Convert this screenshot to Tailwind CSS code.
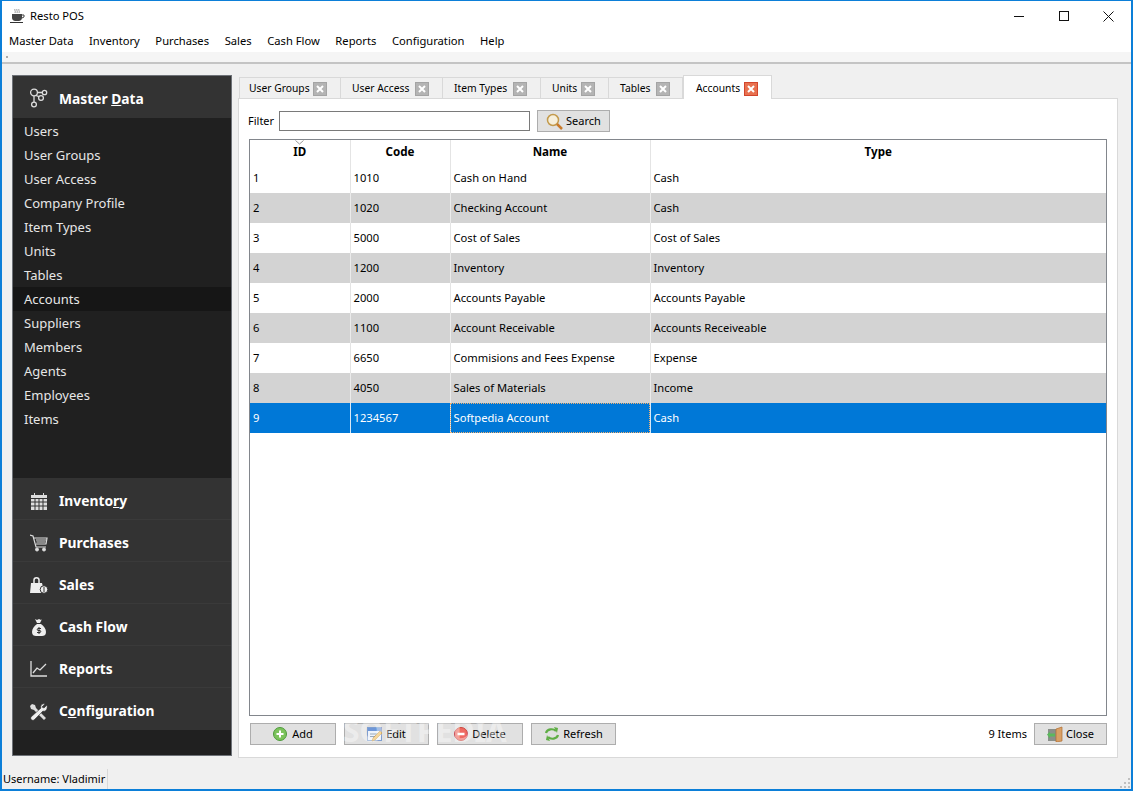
<!DOCTYPE html>
<html lang="en">
<head>
  <meta charset="UTF-8" />
  <title>Resto POS</title>
  <script src="https://cdn.jsdelivr.net/npm/@tailwindcss/browser@4"></script>
</head>
<body class="w-[1133px] h-[791px] overflow-hidden font-['Noto_Sans',sans-serif] text-[11.2px] text-black">
<div class="relative w-full h-full flex flex-col bg-[#f0f0f0] border-x-2 border-t border-b-2 border-[#0c7fd8]">

  <!-- Title bar -->
  <div class="h-[30px] bg-white flex items-center shrink-0 pl-[7px]">
    <svg width="16" height="16" viewBox="0 0 16 16" class="mr-[5px]">
      <path d="M6 1c-1 1 1 2 0 4M8 1c-1 1 1 2 0 4M10 1c-1 1 1 2 0 4" stroke="#999" fill="none"/>
      <path d="M3 6h10v4c0 2-2 3-3 3H6c-1 0-3-1-3-3z" fill="#444"/>
      <path d="M13 7h2v2l-2 1" stroke="#444" fill="none"/>
      <path d="M1 14h13v1H1z" fill="#333"/>
    </svg>
    <span>Resto POS</span>
    <div class="ml-auto flex h-full items-center">
      <button class="w-[45px] h-full flex items-center justify-center"><svg width="10" height="10"><path d="M0 5.5h10" stroke="#111"/></svg></button>
      <button class="w-[45px] h-full flex items-center justify-center"><svg width="10" height="10"><rect x=".5" y=".5" width="9" height="9" fill="none" stroke="#111"/></svg></button>
      <button class="w-[45px] h-full flex items-center justify-center"><svg width="11" height="11"><path d="M.5.5l10 10M10.5.5l-10 10" stroke="#111"/></svg></button>
    </div>
  </div>

  <!-- Menu bar -->
  <nav class="h-[21px] bg-white shrink-0 flex items-center pl-[7px] gap-[15.6px]">
    <span>Master Data</span><span>Inventory</span><span>Purchases</span><span>Sales</span><span>Cash Flow</span><span>Reports</span><span>Configuration</span><span>Help</span>
  </nav>

  <!-- Toolbar strip -->
  <div class="h-[12px] shrink-0 bg-[#f5f5f5] border-b-2 border-[#c4c4c4] pl-[4px] flex items-center"><span class="w-[2px] h-[2px] bg-[#aaa]"></span></div>

  <!-- Body -->
  <div class="flex-1 min-h-0 flex pl-[10px] pr-[13px] pt-[11px] gap-[7px]">

    <!-- Sidebar -->
    <aside class="w-[220px] h-[681px] shrink-0 flex flex-col bg-[#202020] border border-[#6e7278] text-white">
      <div class="h-[42px] shrink-0 bg-[#333] flex items-center pl-[16px] pt-[5px] gap-[11px]">
        <svg width="19" height="20" viewBox="0 0 19 20" fill="none" stroke="#ddd" stroke-width="1.3" class="-mt-[3px]">
          <circle cx="5" cy="4.5" r="3.4"/><circle cx="15.5" cy="4.5" r="2.2"/><circle cx="12" cy="10" r="2.4"/><circle cx="5" cy="16.5" r="2.4"/>
          <path d="M8.4 4.5h4.9M7 7.5l3 1.2M5 8v6"/>
        </svg>
        <span class="text-[13.8px] font-bold">Master <span class="underline">D</span>ata</span>
      </div>
      <ul class="h-[360px] shrink-0 pt-px text-[13px] text-[#e6e6e6]">
        <li class="h-[24px] leading-[24px] pl-[11px]">Users</li>
        <li class="h-[24px] leading-[24px] pl-[11px]">User Groups</li>
        <li class="h-[24px] leading-[24px] pl-[11px]">User Access</li>
        <li class="h-[24px] leading-[24px] pl-[11px]">Company Profile</li>
        <li class="h-[24px] leading-[24px] pl-[11px]">Item Types</li>
        <li class="h-[24px] leading-[24px] pl-[11px]">Units</li>
        <li class="h-[24px] leading-[24px] pl-[11px]">Tables</li>
        <li class="h-[24px] leading-[24px] pl-[11px] bg-[#161616]">Accounts</li>
        <li class="h-[24px] leading-[24px] pl-[11px]">Suppliers</li>
        <li class="h-[24px] leading-[24px] pl-[11px]">Members</li>
        <li class="h-[24px] leading-[24px] pl-[11px]">Agents</li>
        <li class="h-[24px] leading-[24px] pl-[11px]">Employees</li>
        <li class="h-[24px] leading-[24px] pl-[11px]">Items</li>
      </ul>
      <div class="shrink-0 bg-[#333] text-[13.8px] font-bold">
        <div class="h-[42px] pt-[5px] border-b border-[#3a3a3a] flex items-center pl-[17px] gap-[11px]">
          <svg width="18" height="18" viewBox="0 0 18 18" fill="#ddd"><path d="M1 3h16v15H1z"/><path d="M4 1h1v3H4zM13 1h1v3h-1z"/><path d="M1 6.5h16M1 10h16M1 14h16M5 6v12M9 6v12M13 6v12" stroke="#333"/></svg>
          <span>Invento<span class="underline">r</span>y</span>
        </div>
        <div class="h-[42px] pt-[5px] border-b border-[#3a3a3a] flex items-center pl-[17px] gap-[11px]">
          <svg width="18" height="18" viewBox="0 0 18 18" fill="none" stroke="#ddd"><path d="M0 1l3 1 3 11h10M4 4h13l-1 6H6" stroke-width="1.2"/><path d="M6 6h10M6.500 8h9" /><circle cx="7" cy="15.500" r="1.500" fill="#ddd"/><circle cx="14" cy="15.500" r="1.500" fill="#ddd"/></svg>
          <span>Purchases</span>
        </div>
        <div class="h-[42px] pt-[5px] border-b border-[#3a3a3a] flex items-center pl-[17px] gap-[11px]">
          <svg width="18" height="18" viewBox="0 0 18 18"><path d="M1 7h11l1 4-1 6H0z" fill="#eee"/><path d="M4 7V4c0-3 5-3 5 0v3" stroke="#eee" stroke-width="1.500" fill="none"/><circle cx="14" cy="13.500" r="3.800" fill="#eee" stroke="#333"/><path d="M14 11v5" stroke="#333"/></svg>
          <span>Sales</span>
        </div>
        <div class="h-[42px] pt-[5px] border-b border-[#3a3a3a] flex items-center pl-[17px] gap-[11px]">
          <svg width="18" height="18" viewBox="0 0 18 18"><path d="M5 1l2 1 2-1 2 1 1-1-2 4H7z" fill="#eee"/><path d="M7 6h4c3 2 5 5 5 8 0 3-2 4-4 4H6c-2 0-4-1-4-4 0-3 2-6 5-8z" fill="#eee"/><path d="M9 9v7M11 10.500H8c-1 0-1 2 0 2h2c1 0 1 2 0 2H7" stroke="#333" fill="none"/></svg>
          <span>Cash Flow</span>
        </div>
        <div class="h-[42px] pt-[5px] border-b border-[#3a3a3a] flex items-center pl-[17px] gap-[11px]">
          <svg width="18" height="18" viewBox="0 0 18 18" fill="none" stroke="#ddd" stroke-width="1.300"><path d="M1 1v15h16"/><path d="M3 13l4-5 3 2 6-6"/></svg>
          <span>Reports</span>
        </div>
        <div class="h-[42px] pt-[5px] flex items-center pl-[17px] gap-[11px]">
          <svg width="18" height="18" viewBox="0 0 18 18"><path d="M2 1l3 1 1 3 10 10-2 2L4 7 1 6 0 3z" fill="#ddd"/><path d="M17 2l-3 3-2-1 3-3c-3-1-5 2-4 4L1 14c-1 2 1 4 3 3L13 8c2 1 5-1 4-6z" fill="#eee" stroke="#333" stroke-width=".6"/></svg>
          <span>C<span class="underline">o</span>nfiguration</span>
        </div>
      </div>
    </aside>

    <!-- Tabs and pane -->
    <section class="flex-1 min-w-0 flex flex-col h-[683px]">
      <div class="h-[23px] shrink-0 flex items-end relative z-10 text-[10.3px] whitespace-nowrap">
        <div class="w-[102px] h-[21px] pt-px border border-b-0 border-[#d9d9d9] flex items-center pl-[9px]"><span>User Groups</span><span class="w-[14px] h-[14px] shrink-0 ml-auto mr-[13px] bg-[#b4b4b4] border border-[#a4a4a4] flex items-center justify-center"><svg width="8" height="8"><path d="M1 1l6 6M7 1L1 7" stroke="#fff" stroke-width="2"/></svg></span></div>
        <div class="w-[102px] h-[21px] pt-px border border-b-0 border-l-0 border-[#d9d9d9] flex items-center pl-[11px]"><span>User Access</span><span class="w-[14px] h-[14px] shrink-0 ml-auto mr-[13px] bg-[#b4b4b4] border border-[#a4a4a4] flex items-center justify-center"><svg width="8" height="8"><path d="M1 1l6 6M7 1L1 7" stroke="#fff" stroke-width="2"/></svg></span></div>
        <div class="w-[98px] h-[21px] pt-px border border-b-0 border-l-0 border-[#d9d9d9] flex items-center pl-[11px]"><span>Item Types</span><span class="w-[14px] h-[14px] shrink-0 ml-auto mr-[13px] bg-[#b4b4b4] border border-[#a4a4a4] flex items-center justify-center"><svg width="8" height="8"><path d="M1 1l6 6M7 1L1 7" stroke="#fff" stroke-width="2"/></svg></span></div>
        <div class="w-[68px] h-[21px] pt-px border border-b-0 border-l-0 border-[#d9d9d9] flex items-center pl-[11px]"><span>Units</span><span class="w-[14px] h-[14px] shrink-0 ml-auto mr-[13px] bg-[#b4b4b4] border border-[#a4a4a4] flex items-center justify-center"><svg width="8" height="8"><path d="M1 1l6 6M7 1L1 7" stroke="#fff" stroke-width="2"/></svg></span></div>
        <div class="w-[74px] h-[21px] pt-px border border-b-0 border-l-0 border-[#d9d9d9] flex items-center pl-[11px]"><span>Tables</span><span class="w-[14px] h-[14px] shrink-0 ml-auto mr-[12px] bg-[#b4b4b4] border border-[#a4a4a4] flex items-center justify-center"><svg width="8" height="8"><path d="M1 1l6 6M7 1L1 7" stroke="#fff" stroke-width="2"/></svg></span></div>
        <div class="w-[89px] h-[24px] -mb-px pt-[2px] bg-white border border-b-0 border-[#d9d9d9] flex items-center pl-[12px]"><span>Accounts</span><span class="w-[14px] h-[14px] shrink-0 ml-auto mr-[13px] bg-[#e8714f] border border-[#d2452c] flex items-center justify-center"><svg width="8" height="8"><path d="M1 1l6 6M7 1L1 7" stroke="#fff" stroke-width="2"/></svg></span></div>
      </div>

      <div class="relative flex-1 min-h-0 flex flex-col bg-white border border-[#d9d9d9] ml-[-1px] pl-[9px] pr-[10px] pt-[11px] pb-[12px]">
        <!-- Filter row -->
        <div class="h-[22px] shrink-0 flex items-center text-[11px]">
          <span class="w-[31px]">Filter</span>
          <input class="w-[251px] h-[20px] bg-white border border-[#7a7a7a]" />
          <button class="ml-[7px] w-[73px] h-[22px] bg-[#e1e1e1] border border-[#adadad] flex items-center justify-center gap-[3px]">
            <svg width="17" height="17" viewBox="0 0 17 17" fill="none"><circle cx="7" cy="7" r="5.500" fill="#f6efdc" stroke="#c39a4c" stroke-width="1.500"/><path d="M11 11l5 5" stroke="#c97a2b" stroke-width="2.500"/></svg>
            <span>Search</span>
          </button>
        </div>

        <!-- Table -->
        <div class="relative flex-1 min-h-0 mt-[7px] ml-px border border-[#82868c] bg-white">
          <svg width="9" height="5" class="absolute left-[45px] top-0"><path d="M.5.500l4 3.500 4-3.500" stroke="#999" fill="none"/></svg>
          <table class="w-[856px] table-fixed border-collapse text-[11.2px]">
            <colgroup><col class="w-[100px]"><col class="w-[100px]"><col class="w-[200px]"><col class="w-[456px]"></colgroup>
            <thead>
              <tr class="h-[23px] text-[11.6px] font-bold text-center">
                <th class="border-r border-[#e4e4e4]">ID</th><th class="border-r border-[#e4e4e4]">Code</th><th class="border-r border-[#e4e4e4]">Name</th><th>Type</th>
              </tr>
            </thead>
            <tbody>
              <tr class="h-[30px]"><td class="pl-[3px] border-r border-[#e4e4e4]">1</td><td class="pl-[3px] border-r border-[#e4e4e4]">1010</td><td class="pl-[3px] border-r border-[#e4e4e4]">Cash on Hand</td><td class="pl-[3px]">Cash</td></tr>
              <tr class="h-[30px] bg-[#d3d3d3]"><td class="pl-[3px] border-r border-[#ebebeb]">2</td><td class="pl-[3px] border-r border-[#ebebeb]">1020</td><td class="pl-[3px] border-r border-[#ebebeb]">Checking Account</td><td class="pl-[3px]">Cash</td></tr>
              <tr class="h-[30px]"><td class="pl-[3px] border-r border-[#e4e4e4]">3</td><td class="pl-[3px] border-r border-[#e4e4e4]">5000</td><td class="pl-[3px] border-r border-[#e4e4e4]">Cost of Sales</td><td class="pl-[3px]">Cost of Sales</td></tr>
              <tr class="h-[30px] bg-[#d3d3d3]"><td class="pl-[3px] border-r border-[#ebebeb]">4</td><td class="pl-[3px] border-r border-[#ebebeb]">1200</td><td class="pl-[3px] border-r border-[#ebebeb]">Inventory</td><td class="pl-[3px]">Inventory</td></tr>
              <tr class="h-[30px]"><td class="pl-[3px] border-r border-[#e4e4e4]">5</td><td class="pl-[3px] border-r border-[#e4e4e4]">2000</td><td class="pl-[3px] border-r border-[#e4e4e4]">Accounts Payable</td><td class="pl-[3px]">Accounts Payable</td></tr>
              <tr class="h-[30px] bg-[#d3d3d3]"><td class="pl-[3px] border-r border-[#ebebeb]">6</td><td class="pl-[3px] border-r border-[#ebebeb]">1100</td><td class="pl-[3px] border-r border-[#ebebeb]">Account Receivable</td><td class="pl-[3px]">Accounts Receiveable</td></tr>
              <tr class="h-[30px]"><td class="pl-[3px] border-r border-[#e4e4e4]">7</td><td class="pl-[3px] border-r border-[#e4e4e4]">6650</td><td class="pl-[3px] border-r border-[#e4e4e4]">Commisions and Fees Expense</td><td class="pl-[3px]">Expense</td></tr>
              <tr class="h-[30px] bg-[#d3d3d3]"><td class="pl-[3px] border-r border-[#ebebeb]">8</td><td class="pl-[3px] border-r border-[#ebebeb]">4050</td><td class="pl-[3px] border-r border-[#ebebeb]">Sales of Materials</td><td class="pl-[3px]">Income</td></tr>
              <tr class="h-[30px] bg-[#0078d7] text-white"><td class="pl-[3px] border-r border-[#d9e8f5]">9</td><td class="pl-[3px] border-r border-[#d9e8f5]">1234567</td><td class="pl-[3px] border-r border-[#d9e8f5] outline-1 outline-dotted outline-offset-[-1px] outline-[#f0b070]">Softpedia Account</td><td class="pl-[3px]">Cash</td></tr>
            </tbody>
          </table>
        </div>

        <!-- Action row -->
        <div class="h-[22px] shrink-0 mt-[7px] pl-[2px] flex items-center text-[11px]">
          <button class="w-[86px] h-[22px] bg-[#e1e1e1] border border-[#adadad] flex items-center justify-center gap-[5px]">
            <svg width="14" height="14" viewBox="0 0 14 14"><circle cx="7" cy="7" r="6.500" fill="#7cc35c" stroke="#4e9a3c"/><path d="M7 3.500v7M3.500 7h7" stroke="#fff" stroke-width="2"/></svg><span>Add</span>
          </button>
          <button class="ml-[8px] w-[85px] h-[22px] bg-[#e1e1e1] border border-[#adadad] flex items-center justify-center gap-[3px]">
            <svg width="16" height="16" viewBox="0 0 16 16"><rect x=".5" y="1.500" width="14" height="13" fill="#eef3fb" stroke="#7f9fd0"/><path d="M1 2h13v3H1z" fill="#6f97d8"/><path d="M3 8h8M3 10.500h5" stroke="#9ab"/><path d="M5 15l1-3 7-7 2 2-7 7z" fill="#f0c060" stroke="#c08a30" stroke-width=".6"/></svg><span>Edit</span>
          </button>
          <button class="ml-[8px] w-[86px] h-[22px] bg-[#e1e1e1] border border-[#adadad] flex items-center justify-center gap-[4px]">
            <svg width="14" height="14" viewBox="0 0 14 14"><circle cx="7" cy="7" r="6.500" fill="#ef6a62" stroke="#c9453d"/><path d="M3.500 7h7" stroke="#fff" stroke-width="2.500"/></svg><span>Delete</span>
          </button>
          <button class="ml-[8px] w-[85px] h-[22px] bg-[#e1e1e1] border border-[#adadad] flex items-center justify-center gap-[3px]">
            <svg width="16" height="16" viewBox="0 0 16 16" fill="none" stroke="#5fae45" stroke-width="2.200"><path d="M2 7c1-4 7-5 10-2"/><path d="M14 9c-1 4-7 5-10 2"/><path d="M10 1l4 1-1 5z" fill="#5fae45" stroke="none"/><path d="M6 15l-4-1 1-5z" fill="#5fae45" stroke="none"/></svg><span>Refresh</span>
          </button>
          <span class="ml-auto">9 Items</span>
          <button class="ml-[7px] w-[73px] h-[22px] bg-[#e1e1e1] border border-[#adadad] flex items-center justify-center gap-[3px]">
            <svg width="16" height="16" viewBox="0 0 16 16"><rect x="1" y="3" width="9" height="12" fill="#8a8f8a"/><path d="M9 3l6-2v14l-6 1z" fill="#d9a066" stroke="#b06d2e" stroke-width=".7"/><path d="M0 8.500l3-3v2h5v3H3v2z" fill="#5cb85c"/></svg><span>Close</span>
          </button>
        </div>

        <!-- Watermark -->
        <span class="absolute left-[104px] bottom-[8px] text-[30px] leading-[36px] font-bold text-white/40 pointer-events-none">SOFTPEDIA</span>
      </div>
    </section>
  </div>

  <!-- Status bar -->
  <div class="absolute left-0 bottom-0 h-[20px] w-[106px] border-r border-[#d8d8d8] pl-px text-[11px] leading-[20px] whitespace-nowrap">Username: Vladimir</div>
  <svg width="11" height="11" class="absolute right-0 bottom-0" fill="#c0c0c0"><rect x="8" y="0" width="2" height="2"/><rect x="4" y="4" width="2" height="2"/><rect x="8" y="4" width="2" height="2"/><rect x="0" y="8" width="2" height="2"/><rect x="4" y="8" width="2" height="2"/><rect x="8" y="8" width="2" height="2"/></svg>
</div>
</body>
</html>
